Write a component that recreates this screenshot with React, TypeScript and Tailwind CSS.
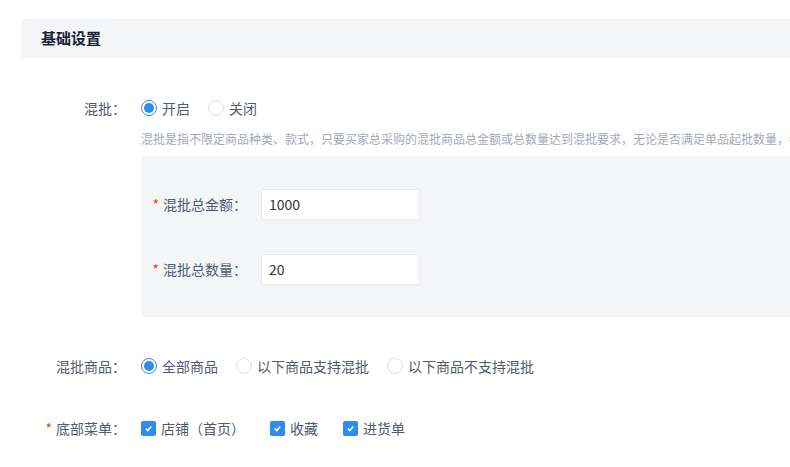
import React from "react";

const Radio = ({ on, label }: { on?: boolean; label: string }) => (
  <label className="flex items-center gap-[5px]">
    <span className={`w-[16px] h-[16px] rounded-full border flex items-center justify-center bg-white ${on ? "border-[#2d8cf0]" : "border-[#dcdee2]"}`}>
      {on && <span className="w-[10px] h-[10px] rounded-full bg-[#2d8cf0]" />}
    </span>
    <span>{label}</span>
  </label>
);

const Check = ({ label }: { label: string }) => (
  <label className="flex items-center gap-[5px]">
    <span className="w-[15px] h-[15px] rounded-[2px] bg-[#2d8cf0] flex items-center justify-center">
      <svg width="9" height="9" viewBox="0 0 10 10"><path d="M2 5.2 L4.2 7.2 L8 2.8" stroke="white" strokeWidth="1.8" fill="none" /></svg>
    </span>
    <span>{label}</span>
  </label>
);

export default function App() {
  const f = { fontFamily: '"Noto Sans CJK SC", "Liberation Sans", sans-serif' };
  return (
    <div className="w-[790px] h-[467px] overflow-hidden bg-white text-[14px] text-[#515a6e]" style={f}>
      <div className="w-[900px] pl-[21px] pt-[19px]">
        <div className="h-[39px] bg-[#f4f5f7] flex items-center pl-[20px] text-[15px] font-bold text-[#17233d]">基础设置</div>
        <div className="flex items-center mt-[40px] h-[20px]">
          <div className="w-[105px] text-right">混批：</div>
          <div className="flex gap-[18px] pl-[15px]"><Radio on label="开启" /><Radio label="关闭" /></div>
        </div>
        <div className="ml-[120px] mt-[12px] text-[12px] text-[#a4a9b3] whitespace-nowrap">混批是指不限定商品种类、款式，只要买家总采购的混批商品总金额或总数量达到混批要求，无论是否满足单品起批数量，都</div>
        <div className="ml-[120px] mt-[8px] h-[161px] bg-[#f4f5f7] pt-[33px]">
          <div className="flex items-center h-[31px]">
            <div className="w-[106px] text-right"><span className="text-[#ed4014] mr-[4px]">*</span>混批总金额：</div>
            <div className="ml-[14px] w-[159px] h-[31px] bg-white border border-[#e8eaec] rounded-[2px] flex items-center pl-[7px] text-[#333]">1000</div>
          </div>
          <div className="flex items-center h-[31px] mt-[34px]">
            <div className="w-[106px] text-right"><span className="text-[#ed4014] mr-[4px]">*</span>混批总数量：</div>
            <div className="ml-[14px] w-[159px] h-[31px] bg-white border border-[#e8eaec] rounded-[2px] flex items-center pl-[7px] text-[#333]">20</div>
          </div>
        </div>
        <div className="flex items-center mt-[39px] h-[20px]">
          <div className="w-[105px] text-right">混批商品：</div>
          <div className="flex gap-[18px] pl-[15px]"><Radio on label="全部商品" /><Radio label="以下商品支持混批" /><Radio label="以下商品不支持混批" /></div>
        </div>
        <div className="flex items-center mt-[42px] h-[20px]">
          <div className="w-[105px] text-right"><span className="text-[#ed4014] mr-[4px]">*</span>底部菜单：</div>
          <div className="flex gap-[25px] pl-[15px]"><Check label="店铺（首页）" /><Check label="收藏" /><Check label="进货单" /></div>
        </div>
      </div>
    </div>
  );
}
